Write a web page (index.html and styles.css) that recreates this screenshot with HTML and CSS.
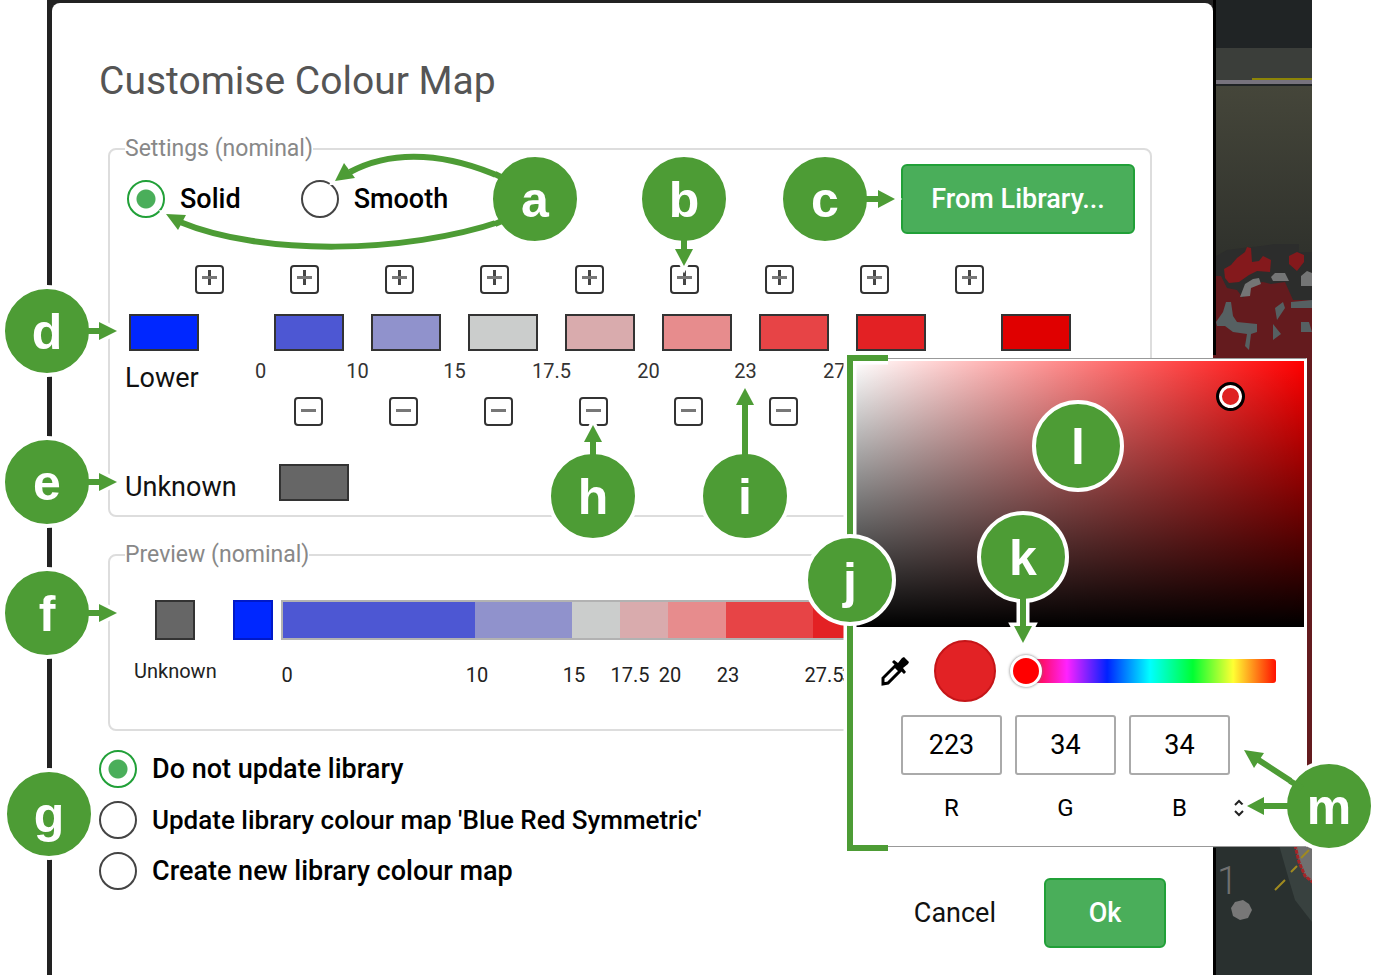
FILE: index.html
```html
<!DOCTYPE html>
<html lang="en">
<head>
    <meta charset="UTF-8">
    <title>Customise Colour Map</title>
    <link rel="stylesheet" href="styles.css">
</head>
<body>
<div class="scene">
    <form class="dialog">
        <h1>Customise Colour Map</h1>

        <fieldset class="settings">
            <legend>Settings (nominal)</legend>
            <div class="mode">
                <label class="radio"><input type="radio" name="mode" checked>Solid</label>
                <label class="radio"><input type="radio" name="mode">Smooth</label>
                <button type="button" class="btn library">From Library...</button>
            </div>
            <div class="steps add">
                <button type="button" class="step" aria-label="Add"></button>
                <button type="button" class="step" aria-label="Add"></button>
                <button type="button" class="step" aria-label="Add"></button>
                <button type="button" class="step" aria-label="Add"></button>
                <button type="button" class="step" aria-label="Add"></button>
                <button type="button" class="step" aria-label="Add"></button>
                <button type="button" class="step" aria-label="Add"></button>
                <button type="button" class="step" aria-label="Add"></button>
                <button type="button" class="step" aria-label="Add"></button>
            </div>
            <div class="swatches">
                <button type="button" class="swatch lower" id="lower"></button>
                <button type="button" class="swatch c1" aria-label="0"></button>
                <button type="button" class="swatch c2" aria-label="10"></button>
                <button type="button" class="swatch c3" aria-label="15"></button>
                <button type="button" class="swatch c4" aria-label="17.5"></button>
                <button type="button" class="swatch c5" aria-label="20"></button>
                <button type="button" class="swatch c6" aria-label="23"></button>
                <button type="button" class="swatch c7" aria-label="27.5"></button>
                <button type="button" class="swatch upper" aria-label="Upper"></button>
            </div>
            <div class="values">
                <label class="name" for="lower">Lower</label>
                <span>0</span>
                <span>10</span>
                <span>15</span>
                <span>17.5</span>
                <span>20</span>
                <span>23</span>
                <span>27.5</span>
            </div>
            <div class="steps remove">
                <button type="button" class="step" aria-label="Remove"></button>
                <button type="button" class="step" aria-label="Remove"></button>
                <button type="button" class="step" aria-label="Remove"></button>
                <button type="button" class="step" aria-label="Remove"></button>
                <button type="button" class="step" aria-label="Remove"></button>
                <button type="button" class="step" aria-label="Remove"></button>
            </div>
            <div class="unknown">
                <label class="name" for="unknown">Unknown</label>
                <button type="button" class="swatch none" id="unknown"></button>
            </div>
        </fieldset>

        <fieldset class="preview">
            <legend>Preview (nominal)</legend>
            <div class="bar">
                <span class="block none"></span>
                <span class="block lower"></span>
                <div class="scale">
                    <i class="c1" style="width: 192px"></i>
                    <i class="c2" style="width: 97px"></i>
                    <i class="c3" style="width: 48px"></i>
                    <i class="c4" style="width: 48px"></i>
                    <i class="c5" style="width: 58px"></i>
                    <i class="c6" style="width: 87px"></i>
                    <i class="c7" style="width: 40px"></i>
                </div>
            </div>
            <div class="ticks">
                <span class="caption">Unknown</span>
                <span style="width: 190px"><b>0</b></span>
                <span style="width: 97px"><b>10</b></span>
                <span style="width: 56px"><b>15</b></span>
                <span style="width: 40px"><b>17.5</b></span>
                <span style="width: 58px"><b>20</b></span>
                <span style="width: 96px"><b>23</b></span>
                <span style="width: 29px"><b>27.5</b></span>
                <span><b>30</b></span>
            </div>
        </fieldset>

        <div class="bottom">
            <div class="update">
                <label class="radio"><input type="radio" name="update" checked>Do not update library</label>
                <label class="radio existing"><input type="radio" name="update">Update library colour map 'Blue Red Symmetric'</label>
                <label class="radio"><input type="radio" name="update">Create new library colour map</label>
            </div>
            <div class="actions">
                <button type="button" class="cancel">Cancel</button>
                <button type="button" class="btn ok">Ok</button>
            </div>
        </div>

        <div class="picker">
            <div class="shade"><span class="cursor"></span></div>
            <div class="hue">
                <button type="button" class="dropper" aria-label="Pick a colour">
                    <svg viewBox="0 0 30 30" width="30" height="30">
                        <path d="M3 28 V22 L15 10 L20 15 L8 27 Z" fill="none" stroke="#000" stroke-width="3"/>
                        <path d="M12 6 L14 4 L18 7 L22 2 L24 1 L29 6 L28 8 L23 12 L26 16 L24 18 Z"/>
                    </svg>
                </button>
                <span class="current"></span>
                <input type="range" min="0" max="360" value="0" aria-label="Hue">
            </div>
            <div class="rgb">
                <label><input type="text" value="223">R</label>
                <label><input type="text" value="34">G</label>
                <label><input type="text" value="34">B</label>
                <button type="button" class="format" aria-label="Format">
                    <svg viewBox="0 0 12 18" width="12" height="18">
                        <path d="M2 6 L6 2 L10 6 M2 12 L6 16 L10 12" fill="none" stroke="#222" stroke-width="2"/>
                    </svg>
                </button>
            </div>
        </div>
    </form>

    <!-- map behind the dialog -->
    <svg class="map" viewBox="0 0 99 975" width="99" height="975">
        <defs>
            <linearGradient id="ground" x1="0" y1="0" x2="0" y2="1">
                <stop offset="0" stop-color="#45463a"/>
                <stop offset="1" stop-color="#2e302b"/>
            </linearGradient>
        </defs>
        <rect width="99" height="975" fill="#202425"/>
        <rect y="48" width="99" height="34" fill="#3b3e3a"/>
        <rect y="86" width="99" height="180" fill="url(#ground)"/>
        <rect y="80" width="99" height="4" fill="#77737d"/>
        <rect x="39" y="78" width="60" height="2" fill="#8c8407"/>
        <path fill="#2c2d2c" d="M0 258 L14 250 L30 248 L48 246 L62 244 H86 V252 H99 V365 H0 Z"/>
        <path fill="#641b1e" d="M0 276 H8 L14 288 L24 290 L30 298 L38 284 L50 282 L58 284 L72 282 L80 300 H99 V850 H0 Z"/>
        <path fill="#84191c" d="M12 278 L11 269 L18 265 L24 258 L32 252 L34 247 L38 248 L39 262 L46 261 L50 256 L58 260 L57 272 L44 271 L36 275 L26 282 L16 283 Z M76 256 L84 252 L91 255 L91 262 L84 271 L76 264 Z"/>
        <path fill="#747575" d="M27 297 L32 284 L40 279 L46 278 L48 284 L38 288 L37 296 Z M58 277 L62 273 H72 L76 281 H60 Z M88 276 L94 271 L99 273 V286 H88 Z"/>
        <path fill="#566062" d="M3 322 L10 312 L13 302 L18 302 L20 316 L24 322 L44 324 V332 L38 334 L36 350 L32 346 L34 334 L20 332 L12 326 L4 326 Z M62 308 L70 302 L72 308 L64 320 Z M60 324 L68 334 L60 340 Z M78 302 L99 300 V308 H78 Z M88 322 H96 L99 332 H88 Z"/>
        <rect y="845" width="99" height="130" fill="#29302f"/>
        <path fill="#38413f" d="M66 845 H99 V922 L82 900 L76 880 Z"/>
        <path fill="#707070" d="M82 845 L86 862 L92 876 L102 884 V845 Z" stroke="#a52428" stroke-width="3" stroke-dasharray="4 1"/>
        <path d="M62 890 L72 880 M78 872 L84 866 M88 858 L96 850" stroke="#a08a20" stroke-width="2"/>
        <text x="4" y="894" fill="#707070" font-size="38" font-weight="300">1</text>
        <path fill="#777" d="M22 902 L30 900 L36 904 L39 910 L35 918 L27 920 L20 916 L18 908 Z"/>
        <path fill="#000" d="M0 0 H3 V355 H0 Z M0 848 H3 V975 H0 Z"/>
    </svg>
</div>

<!-- callouts -->
<svg class="callouts" viewBox="0 0 1376 975" width="1376" height="975">
    <defs>
        <g id="lines">
            <path d="M503 178 C450 154 395 148 350 172"/>
            <path d="M502 221 C405 254 262 256 180 222"/>
            <path d="M684 235 V252 M860 199 H882 M80 331 H102 M80 482 H102 M80 613 H102"/>
            <path d="M593 460 V440 M745 460 V402 M1023 590 V628"/>
            <path d="M1300 787 L1257 759 M1290 806 H1262"/>
            <path d="M888 358 H850 V848 H888"/>
        </g>
        <g id="heads">
            <path d="M335 181 L344 163 L355 178 Z"/>
            <path d="M166 214 L186 215 L178 230 Z"/>
            <path d="M684 266 L675 249 H693 Z"/>
            <path d="M895 199 L878 190 V208 Z"/>
            <path d="M117 331 L99 322 V340 Z"/>
            <path d="M117 482 L99 473 V491 Z"/>
            <path d="M117 613 L99 604 V622 Z"/>
            <path d="M593 425 L584 442 H602 Z"/>
            <path d="M745 388 L736 405 H754 Z"/>
            <path d="M1023 643 L1014 626 H1032 Z"/>
            <path d="M1244 750 L1264 753 L1254 768 Z"/>
            <path d="M1247 806 L1264 797 V815 Z"/>
        </g>
    </defs>
    <use href="#lines" class="line halo"/>
    <use href="#heads" class="head halo"/>
    <use href="#lines" class="line"/>
    <use href="#heads" class="head"/>
    <g class="badges">
        <circle cx="535" cy="199" r="44"/><text x="535" y="217">a</text>
        <circle cx="684" cy="199" r="44"/><text x="684" y="217">b</text>
        <circle cx="825" cy="199" r="44"/><text x="825" y="217">c</text>
        <circle cx="47" cy="331" r="44"/><text x="47" y="349">d</text>
        <circle cx="47" cy="482" r="44"/><text x="47" y="500">e</text>
        <circle cx="47" cy="613" r="44"/><text x="47" y="631">f</text>
        <circle cx="49" cy="814" r="44"/><text x="49" y="832">g</text>
        <circle cx="593" cy="496" r="44"/><text x="593" y="514">h</text>
        <circle cx="745" cy="496" r="44"/><text x="745" y="514">i</text>
        <circle cx="850" cy="580" r="44"/><text x="850" y="598">j</text>
        <circle cx="1023" cy="557" r="44"/><text x="1023" y="575">k</text>
        <circle cx="1078" cy="446" r="44"/><text x="1078" y="464">l</text>
        <circle cx="1329" cy="806" r="44"/><text x="1329" y="824">m</text>
    </g>
    <!-- arrow ends drawn over the badge outlines -->
    <path class="line" d="M495 174 L503 178 M495 224 L502 221 M684 235 V248 M860 199 H875 M80 331 H95 M80 482 H95 M80 613 H95 M593 460 V445 M745 460 V445 M1023 590 V625 M1302 788 L1290 781 M1292 806 H1275"/>
</svg>
</body>
</html>
```
FILE: styles.css
```css
* {
    margin: 0;
    padding: 0;
    box-sizing: border-box;
}

body {
    position: relative;
    background: #fff;
    font-family: Roboto, sans-serif;
    font-size: 27px;
    line-height: 28px;
    color: #111;
    overflow: hidden;
}

button,
input {
    font: inherit;
    color: inherit;
}

button {
    cursor: pointer;
}

.scene {
    display: flex;
    min-height: 100vh;
    margin: 0 64px 0 47px;
    padding: 3px 0 0 5px;
    background: #222;
}

.map {
    flex: none;
    margin-top: -3px;
}

.dialog {
    position: relative;
    flex: 1;
    padding: 54px 47px 0;
    background: #fff;
    border-radius: 8px 8px 0 0;
}

h1 {
    font-size: 39px;
    line-height: 48px;
    font-weight: 400;
    color: #555;
}

fieldset {
    margin: 0 14px 0 9px;
    padding: 0 15px;
    border: 2px solid #ddd;
    border-radius: 8px;
}

legend {
    font-size: 23px;
    line-height: 28px;
    color: #888;
}

.settings {
    margin-top: 30px;
    padding-top: 1px;
    padding-bottom: 14px;
}

.radio {
    display: flex;
    align-items: center;
    gap: 15px;
    font-weight: 500;
    color: #000;
}

.radio.existing {
    font-size: 26px;
}

.radio input {
    appearance: none;
    width: 38px;
    height: 38px;
    border: 2px solid #444;
    border-radius: 50%;
}

.radio input:checked {
    border-color: #21a038;
    background: radial-gradient(circle, #4aae5a 9px, #fff 10px);
}

.mode {
    display: flex;
    align-items: center;
    gap: 60px;
    padding-left: 2px;
}

.btn {
    height: 70px;
    border: 2px solid #21a038;
    border-radius: 6px;
    background: #4aae5a;
    color: #fff;
    font-weight: 500;
}

.library {
    width: 234px;
    margin-left: auto;
}

.steps {
    display: flex;
    gap: 66px;
}

.add {
    margin-top: 31px;
    padding-left: 70px;
}

.remove {
    padding-left: 169px;
}

.step {
    width: 29px;
    height: 29px;
    border: 2px solid #333;
    border-radius: 4px;
    background: linear-gradient(#777, #777) 50% 10px / 15px 3px no-repeat #fff;
}

.add .step {
    background: linear-gradient(#777, #777) 50% 9px / 15px 3px no-repeat, linear-gradient(#444, #444) 50% 3px / 3px 15px no-repeat #fff;
}

.swatches {
    display: flex;
    gap: 27px;
    margin-top: 20px;
    padding-left: 4px;
}

.swatch {
    width: 70px;
    height: 37px;
    border: 2px solid #333;
}

.swatch.lower {
    margin-right: 48px;
}

.swatch.upper {
    margin-left: 48px;
}

.lower { background: #0027ff; }
.c1 { background: #4d57d3; }
.c2 { background: #9092cc; }
.c3 { background: #cbcdcc; }
.c4 { background: #d9abad; }
.c5 { background: #e78c8d; }
.c6 { background: #e74446; }
.c7 { background: #e32124; }
.upper { background: #e00000; }
.none { background: #666; }

.values {
    display: flex;
    height: 46px;
    padding-top: 8px;
}

.values span {
    width: 97px;
    font-size: 20px;
    line-height: 24px;
    text-align: center;
    color: #333;
}

.values .name {
    width: 87px;
    padding-top: 5px;
}

.unknown {
    display: flex;
    align-items: flex-end;
    margin-top: 38px;
}

.unknown .name {
    width: 154px;
}

.preview {
    margin-top: 24px;
    padding-top: 31px;
    padding-bottom: 42px;
}

.bar {
    display: flex;
    padding-left: 30px;
}

.block {
    width: 40px;
    height: 40px;
    border: 2px solid #333;
}

.block.lower {
    margin: 0 8px 0 38px;
    border-color: #0019c8;
}

.scale {
    display: flex;
    border: 2px solid rgba(0, 0, 0, .3);
    border-right: 0;
}

.ticks {
    display: flex;
    margin-top: 19px;
    font-size: 20px;
    line-height: 24px;
    color: #222;
}

.ticks .caption {
    width: 162px;
    padding-left: 9px;
}

.ticks b {
    display: block;
    width: 60px;
    margin: 4px 0 0 -30px;
    font-weight: 400;
    text-align: center;
}

.bottom {
    display: flex;
    justify-content: space-between;
    margin-top: 19px;
}

.update {
    display: flex;
    flex-direction: column;
    gap: 13px;
}

.actions {
    display: flex;
    align-items: center;
    gap: 48px;
    padding-top: 128px;
}

.cancel {
    border: 0;
    background: none;
}

.ok {
    width: 122px;
}

/* colour picker */
.picker {
    position: absolute;
    top: 355px;
    right: -94px;
    width: 455px;
    padding: 2px;
    border: 1px solid #999;
    border-right-color: #fff;
    background: #fff;
}

.shade {
    position: relative;
    height: 266px;
    background: linear-gradient(to top, #000, transparent), linear-gradient(to right, #fff, #f00);
}

.cursor {
    position: absolute;
    top: 21px;
    right: 59px;
    width: 29px;
    height: 29px;
    border: 3px solid #000;
    border-radius: 50%;
    background: #df2222;
    box-shadow: inset 0 0 0 3px #fff;
}

.hue {
    display: flex;
    align-items: center;
    padding: 13px 28px 13px 25px;
}

.dropper,
.format {
    border: 0;
    background: none;
}

.dropper {
    height: 30px;
}

.current {
    width: 62px;
    height: 62px;
    margin: 0 14px 0 24px;
    border: 2px solid #c51518;
    border-radius: 50%;
    background: #e22225;
}

.hue input {
    appearance: none;
    flex: 1;
    min-width: 0;
    height: 24px;
    border-radius: 3px;
    background: linear-gradient(to right, #f00, #f2f 17%, #02f 33%, #0ff 50%, #0f3 67%, #ff3 83%, #f10) right / calc(100% - 14px) 100% no-repeat;
}

.hue input::-webkit-slider-thumb {
    appearance: none;
    width: 32px;
    height: 32px;
    border: 3px solid #fff;
    border-radius: 50%;
    background: #f00;
    box-shadow: 0 0 3px #777;
}

.rgb {
    display: flex;
    gap: 13px;
    padding: 0 0 22px 46px;
}

.rgb label {
    width: 101px;
    font-size: 24px;
    text-align: center;
    color: #000;
}

.rgb input {
    display: block;
    width: 100%;
    height: 60px;
    margin-bottom: 19px;
    border: 2px solid #aaa;
    border-radius: 3px;
    font-size: 27px;
    text-align: center;
}

.format {
    align-self: flex-end;
    height: 28px;
    margin-left: -10px;
}

/* callouts */
.callouts {
    position: absolute;
    top: 0;
    left: 0;
    pointer-events: none;
}

.line {
    fill: none;
    stroke: #4d9c35;
    stroke-width: 6;
}

.head {
    fill: #4d9c35;
}

.line.halo {
    stroke: #fff;
    stroke-width: 13;
}

.head.halo {
    stroke: #fff;
    stroke-width: 7;
}

.badges circle {
    fill: #4d9c35;
    stroke: #fff;
    stroke-width: 4;
}

.badges text {
    fill: #fff;
    font-family: "Liberation Sans", Arial, sans-serif;
    font-size: 50px;
    font-weight: bold;
    text-anchor: middle;
}
```
